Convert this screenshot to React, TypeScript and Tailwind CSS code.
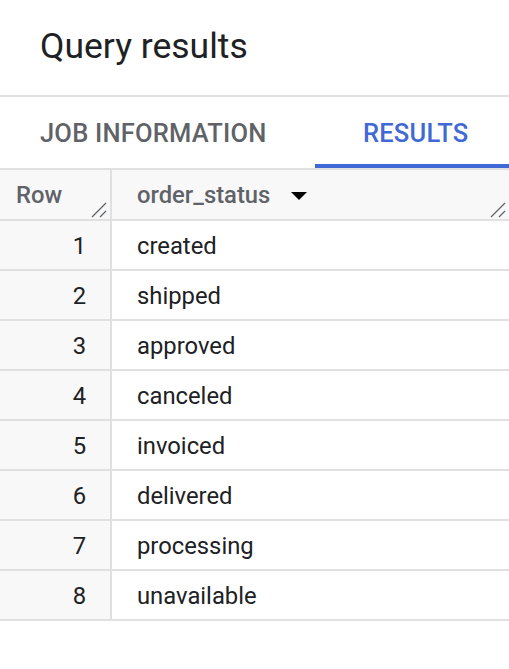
import React from 'react'

const rows = ['created', 'shipped', 'approved', 'canceled', 'invoiced', 'delivered', 'processing', 'unavailable']

function ResizeHandle() {
  return (
    <svg width="16" height="16" viewBox="0 0 16 16" className="absolute right-[3px] bottom-[1px]">
      <line x1="1" y1="15" x2="15" y2="1" stroke="#5f6368" strokeWidth="1.3" />
      <line x1="9" y1="15" x2="15" y2="9" stroke="#5f6368" strokeWidth="1.3" />
    </svg>
  )
}

export default function App() {
  return (
    <div className="w-[509px] h-[669px] bg-white overflow-hidden font-['Roboto',sans-serif]">
      {/* title */}
      <div className="h-[95px] pl-[40px] pt-[23px]">
        <h1 className="text-[35.5px] leading-[46px] text-[#202124]">Query results</h1>
      </div>
      <div className="h-[2px] bg-[#e0e0e0]" />

      {/* tabs */}
      <div className="flex h-[71px]">
        <div className="w-[315px] flex items-center pl-[40px] pt-[2px]">
          <span className="text-[25.5px] font-medium text-[#5f6368] tracking-[0.2px]">JOB INFORMATION</span>
        </div>
        <div className="flex-1 flex flex-col">
          <div className="flex-1 flex items-center pl-[48px] pt-[6px]">
            <span className="text-[25.5px] font-medium text-[#4169d6] tracking-[0.2px]">RESULTS</span>
          </div>
          <div className="h-[4px] bg-[#4169d6]" />
        </div>
      </div>

      {/* table */}
      <div className="border-t-2 border-[#e0e0e0]">
        <div className="flex h-[51px] bg-[#f8f8f8] border-b-2 border-[#e0e0e0] text-[23.8px] text-[#5f6368] font-medium">
          <div className="relative w-[112px] border-r-2 border-[#e0e0e0] flex items-center pl-[16px] pt-[2px]">
            Row
            <ResizeHandle />
          </div>
          <div className="relative flex-1 flex items-center pl-[25px] pt-[2px]">
            order_status
            <svg width="16" height="8" viewBox="0 0 16 8" className="ml-[21px]">
              <path d="M0 0 L16 0 L8 8 Z" fill="#000" />
            </svg>
            <ResizeHandle />
          </div>
        </div>
        {rows.map((r, i) => (
          <div key={r} className="flex h-[50px] border-b-2 border-[#e0e0e0] text-[23.8px] text-[#202124]">
            <div className="w-[112px] bg-[#f8f8f8] border-r-2 border-[#e0e0e0] flex items-center justify-end pr-[24px] pt-[3px]">
              {i + 1}
            </div>
            <div className="flex-1 flex items-center pl-[25px] pt-[3px]">{r}</div>
          </div>
        ))}
      </div>
    </div>
  )
}
